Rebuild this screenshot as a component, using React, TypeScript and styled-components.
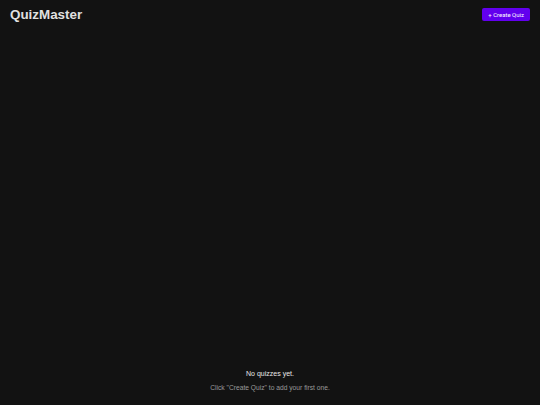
import React from "react";
import styled, { createGlobalStyle } from "styled-components";

const Global = createGlobalStyle`
  html, body { margin: 0; padding: 0; background: #121212; }
  body { font-family: "Liberation Sans", Arial, sans-serif; color: #e0e0e0; }
`;

const Page = styled.div`
  min-height: 405px;
  display: flex;
  flex-direction: column;
  box-sizing: border-box;
`;

const Header = styled.header`
  display: flex;
  align-items: center;
  justify-content: space-between;
  padding: 6px 10px 0 10px;
`;

const Title = styled.h1`
  margin: 0;
  font-size: 13.4px;
  font-weight: 700;
  color: #e0e0e0;
  line-height: 17px;
`;

const Button = styled.button`
  background: #6200ee;
  color: #ffffff;
  border: none;
  border-radius: 2px;
  font-family: Roboto, "Liberation Sans", sans-serif;
  font-weight: 400;
  font-size: 6px;
  height: 13px;
  padding: 0 6px;
  cursor: pointer;
`;

const Main = styled.main`
  flex: 1;
  display: flex;
  flex-direction: column;
  justify-content: flex-end;
  align-items: center;
  padding-bottom: 14px;
`;

const EmptyTitle = styled.p`
  margin: 0;
  font-size: 7px;
  font-weight: 400;
  color: #e8e8e8;
`;

const EmptyHint = styled.p`
  margin: 7px 0 0 0;
  font-size: 6.7px;
  color: #9a9a9a;
`;

export default function App() {
  return (
    <>
      <Global />
      <Page>
        <Header>
          <Title>QuizMaster</Title>
          <Button>+ Create Quiz</Button>
        </Header>
        <Main>
          <EmptyTitle>No quizzes yet.</EmptyTitle>
          <EmptyHint>Click "Create Quiz" to add your first one.</EmptyHint>
        </Main>
      </Page>
    </>
  );
}
